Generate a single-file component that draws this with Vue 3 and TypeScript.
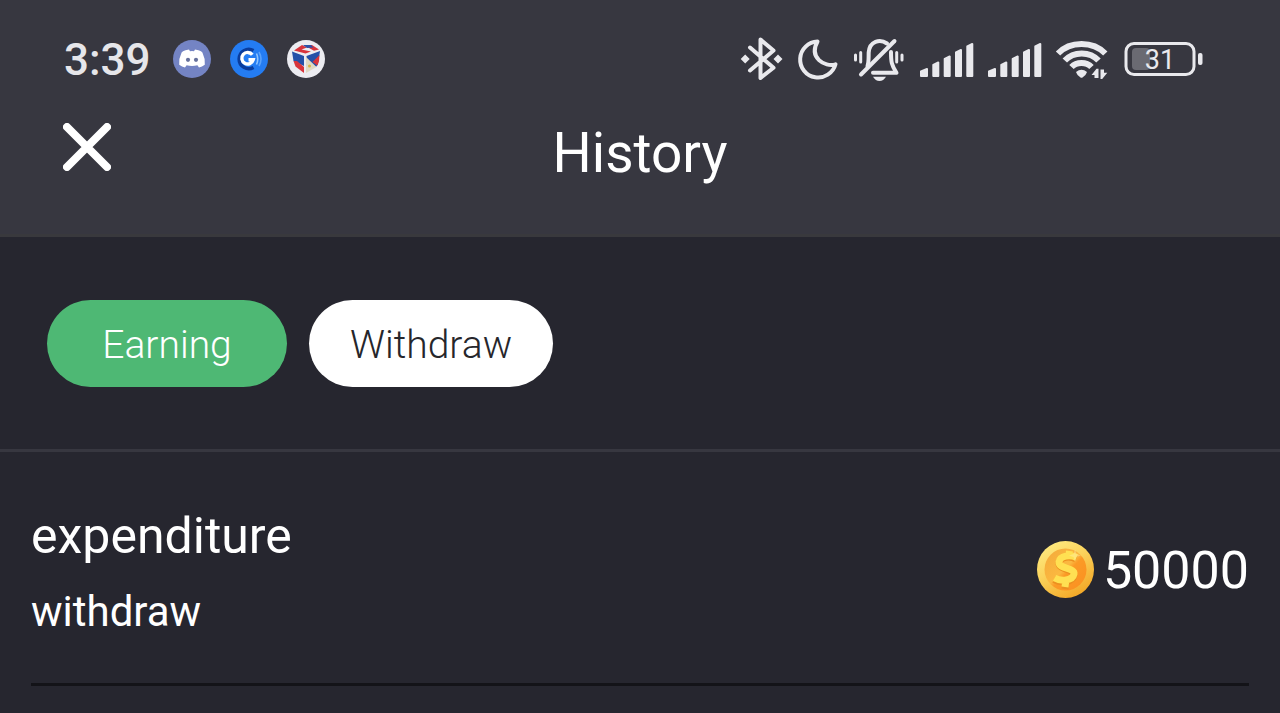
<script setup lang="ts">
import { ref } from 'vue'

type Tab = 'Earning' | 'Withdraw'

interface Entry {
  id: number
  title: string
  kind: string
  amount: number
}

const tabs: Tab[] = ['Earning', 'Withdraw']
const active = ref<Tab>('Earning')
const entries: Entry[] = [{ id: 1, title: 'expenditure', kind: 'withdraw', amount: 50000 }]
const signals = [1, 2]
</script>

<template>
  <div class="screen">
    <header class="top">
      <div class="status">
        <div class="status-left">
          <span class="time">3:39</span>
          <svg class="app" viewBox="0 0 38 38" aria-hidden="true">
            <circle cx="19" cy="19" r="19" fill="#7484c4" />
            <path fill="#fff" d="M12.500 10.200 L16 9.500 L17 11.200 Q19 10.900 21 11.200 L22 9.500 L25.500 10.200 Q28.500 11 29.400 12.600 Q32.300 18.500 31.800 24.800 Q29 27 26 27.500 L24.400 25.200 Q19 26.600 13.600 25.200 L12 27.500 Q9 27 6.200 24.800 Q5.700 18.500 8.600 12.600 Q9.500 11 12.500 10.200Z" />
            <circle cx="15" cy="19.800" r="2.100" fill="#66719c" />
            <circle cx="23" cy="19.800" r="2.100" fill="#66719c" />
          </svg>
          <svg class="app" viewBox="0 0 38 38" aria-hidden="true">
            <circle cx="19" cy="19" r="19" fill="#247cf2" />
            <path d="M23.500 10.500 A9.700 9.700 0 1 0 23.500 27.500" fill="none" stroke="#0a3c9c" stroke-width="3.500" />
            <path d="M22.300 14.800 A5.800 5.800 0 1 0 23.200 19.800 H18.500" fill="none" stroke="#fff" stroke-width="3.400" />
            <path d="M26.500 13.500 Q29 19 26.500 24.500" fill="none" stroke="#8fc4ff" stroke-width="1.600" />
            <path d="M29 12 Q33 19 29 26" fill="none" stroke="#5aa2fa" stroke-width="1.600" />
          </svg>
          <svg class="app" viewBox="0 0 38 38" aria-hidden="true">
            <circle cx="19" cy="19" r="19" fill="#ececf1" />
            <path d="M7 10.500 L15 5 L20 7.500 L14.500 9.500 L24 11.500 L18.500 13.500Z" fill="#d8343c" />
            <path d="M17 5 H25 L32 9.500 L27 10.800 L22 8Z" fill="#d8343c" />
            <path d="M16 5 H24 L26.500 7.500 L20 8Z" fill="#2c50a8" />
            <path d="M5 11.500 L17 16 V26 L6.500 21Z" fill="#2450a8" />
            <path d="M6.500 21 L10 21 L17 27 V33 L8.500 26.500Z" fill="#d8343c" />
            <path d="M33 11 L19.500 16 V20 L29 27 L31 24Z" fill="#2450a8" />
            <path d="M32.500 15 L25.500 22 L30.500 25.500 L32 21Z" fill="#d8343c" />
            <path d="M19 17 L29.500 27 L19 33Z" fill="#dfd9c4" />
            <circle cx="22.500" cy="26" r="1.500" fill="#d8b54a" />
          </svg>
        </div>
        <div class="status-right">
          <svg class="icon w41" viewBox="0 0 41 44" aria-hidden="true">
            <path class="line" d="M9 10.500 L32.500 30.800 L19.500 41 V2.500 L32.500 13.500 L9 33.500" />
            <path class="solid" d="M4.200 17.500 L8.700 22 L4.200 26.500 L-0.300 22Z M37 17.500 L41.500 22 L37 26.500 L32.500 22Z" />
          </svg>
          <svg class="icon w41" viewBox="0 0 41 44" aria-hidden="true">
            <path class="line" d="M20.500 4.500 A18 18 0 1 0 38.500 27.300 C27.500 30.500 11.500 20.500 20.500 4.500Z" />
          </svg>
          <svg class="icon w51" viewBox="0 0 51 44" aria-hidden="true">
            <path class="line" d="M41.500 4 L8 37.500" />
            <path class="line" d="M14.500 29 C16 25 15.500 20 15.700 15.500 C16.500 4 27 1.500 34 6.500" />
            <path class="line" d="M38 15 C38 25 38.500 28 43.500 35.800 H20" />
            <path class="line thin" d="M2.500 18 V23 M7.700 15.500 V25 M43.700 15.500 V25 M49 18 V23" />
            <path class="solid" d="M20 39.800 H33 Q30.500 44 26.500 44 Q22.500 44 20 39.800Z" />
          </svg>
          <svg v-for="s in signals" :key="s" class="icon w53" viewBox="0 0 53 44" aria-hidden="true">
            <path class="solid bars" d="M2 34.500 L8 32 V39 H2Z M14.300 28 L19.300 25.500 V39 H14.300Z M25.700 22 L30.700 19.500 V39 H25.700Z M37 15.500 L42 13 V39 H37Z M48.300 9.500 L53.300 7 V39 H48.300Z" />
          </svg>
          <svg class="icon w53" viewBox="0 0 53 44" aria-hidden="true">
            <path class="line wave" d="M3 16.500 C15 3.800 38 3.800 50.300 16.500 M9.800 23.500 C18.500 14 35 14 43.500 23.500 M16.500 30 C21.500 24.500 31.500 24.500 36.500 30" />
            <path class="solid" d="M21 35 Q26.500 30.500 32 35 Q31 38.500 27.500 40.500 Q26.500 41 25.500 40.500 Q22 38.500 21 35Z" />
            <path class="solid" d="M36.500 38 L41.500 31.800 H43.500 V41 H39.500 V38Z M45.500 32.500 H49 V35.800 H52.300 L47.200 42 H45.500Z" />
          </svg>
          <svg class="icon w80" viewBox="0 0 80 44" role="img" aria-label="Battery 31">
            <rect class="line case" x="3" y="6.500" width="68" height="31" rx="8" />
            <rect x="9" y="11" width="18" height="22" rx="4" fill="#6a6a72" />
            <rect class="solid" x="75" y="16" width="4.500" height="12" rx="2" />
            <text class="level" x="37" y="32" text-anchor="middle">31</text>
          </svg>
        </div>
      </div>
      <div class="bar">
        <button class="close" type="button" aria-label="Close">
          <svg viewBox="0 0 48 48" aria-hidden="true">
            <path d="M4 4 L44 44 M44 4 L4 44" stroke="#fff" stroke-width="8" stroke-linecap="round" />
          </svg>
        </button>
        <h1>History</h1>
      </div>
    </header>

    <nav class="tabs" aria-label="History type">
      <button
        v-for="tab in tabs"
        :key="tab"
        type="button"
        class="tab"
        :class="{ on: tab === active }"
        :aria-pressed="tab === active"
        @click="active = tab"
      >
        {{ tab }}
      </button>
    </nav>

    <ul class="list">
      <li v-for="entry in entries" :key="entry.id" class="entry">
        <div class="words">
          <span class="title">{{ entry.title }}</span>
          <span class="kind">{{ entry.kind }}</span>
        </div>
        <div class="amount">
          <svg class="coin" viewBox="0 0 57 57" aria-hidden="true">
            <defs>
              <linearGradient id="rim" x1="0" y1="0" x2="0.600" y2="1">
                <stop offset="0" stop-color="#fff08a" />
                <stop offset="0.500" stop-color="#fbd35c" />
                <stop offset="1" stop-color="#f3aa2a" />
              </linearGradient>
              <linearGradient id="face" x1="0" y1="0" x2="1" y2="1">
                <stop offset="0" stop-color="#f3a93a" />
                <stop offset="0.480" stop-color="#fbb840" />
                <stop offset="0.560" stop-color="#fb9a26" />
                <stop offset="1" stop-color="#fb8f20" />
              </linearGradient>
            </defs>
            <circle cx="28.500" cy="28.500" r="28.500" fill="url(#rim)" />
            <circle cx="28.500" cy="28.500" r="21" fill="url(#face)" />
            <g fill="none" stroke-linejoin="round">
              <path d="M39 18 C33 14.500 23 15.500 22 22 C21.500 29 38 28 37 34.500 C35.500 41.500 24 42 17 38.500 M32.500 11 L31 17 M29 40 L28 48" stroke="#ec9020" stroke-width="7" />
              <path d="M39.500 16.500 C33 13.500 23 14.500 22 21 C21.500 28 38 26.500 37 33 C35.500 40 24 40.500 17.500 37 M32.500 10 L31.500 16 M29 38 L28 46" stroke="#ffe052" stroke-width="7" />
            </g>
            <path d="M38 8.500 L39.500 13 L44 14.500 L39.500 16 L38 20.500 L36.500 16 L32 14.500 L36.500 13Z" fill="#fff2c0" opacity="0.350" />
          </svg>
          <span>{{ entry.amount }}</span>
        </div>
      </li>
    </ul>
  </div>
</template>

<style>
body {
  margin: 0;
  background: #26262f;
}
</style>

<style scoped>
.screen {
  min-height: 100vh;
  background: #26262f;
  color: #fff;
  font-family: Roboto, "Noto Sans", sans-serif;
  font-weight: 400;
}
.top {
  background: #373740;
  border-bottom: 3px solid #39393d;
}
.status {
  display: flex;
  justify-content: space-between;
  align-items: center;
  padding: 37px 77px 0 64px;
}
.status-left {
  display: flex;
  align-items: center;
  gap: 19px;
}
.time {
  width: 90px;
  padding-top: 2px;
  font-size: 44px;
  line-height: 42px;
  font-weight: 500;
  color: #e6e6ea;
}
.app {
  display: block;
  width: 38px;
  height: 38px;
}
.status-right {
  display: flex;
  gap: 15px;
}
.icon {
  display: block;
  height: 44px;
  overflow: visible;
}
.w41 { width: 41px; }
.w51 { width: 51px; }
.w53 { width: 53px; }
.w80 { width: 80px; }
.line {
  fill: none;
  stroke: #e9e9ed;
  stroke-width: 4px;
  stroke-linecap: round;
  stroke-linejoin: round;
}
.thin,
.case { stroke-width: 3px; }
.wave {
  stroke-width: 6px;
  stroke-linecap: butt;
}
.solid { fill: #e9e9ed; }
.bars {
  stroke: #e9e9ed;
  stroke-width: 2px;
  stroke-linejoin: round;
}
.level {
  fill: #e9e9ed;
  font-size: 27px;
  font-weight: 400;
}
.bar {
  display: grid;
  grid-template-columns: 48px 1fr 48px;
  align-items: start;
  padding: 42px 63px 50px;
}
.close {
  width: 48px;
  height: 48px;
  padding: 0;
  border: 0;
  background: none;
}
.close svg {
  display: block;
  width: 48px;
  height: 48px;
}
h1 {
  margin: 0;
  font-size: 55px;
  line-height: 61px;
  font-weight: 400;
  text-align: center;
}
.tabs {
  display: flex;
  gap: 22px;
  padding: 63px 47px 62px;
  border-bottom: 3px solid #373740;
}
.tab {
  min-width: 240px;
  height: 87px;
  padding: 2px 41px 0;
  border: 0;
  border-radius: 44px;
  background: #fff;
  color: #26262b;
  font: inherit;
  font-size: 39px;
  font-weight: 300;
}
.tab.on {
  background: #4eb874;
  color: #fff;
}
.list {
  margin: 0;
  padding: 0 31px;
  list-style: none;
}
.entry {
  display: flex;
  justify-content: space-between;
  align-items: center;
  padding: 48px 0 36px;
  border-bottom: 3px solid #131318;
}
.words {
  display: flex;
  flex-direction: column;
}
.title {
  font-size: 50px;
  line-height: 72px;
}
.kind {
  padding-top: 4px;
  font-size: 42px;
  line-height: 71px;
}
.amount {
  display: flex;
  align-items: center;
  gap: 9px;
  padding-bottom: 8px;
  font-size: 52px;
}
.amount span {
  padding-top: 2px;
  line-height: 60px;
}
.coin {
  display: block;
  width: 57px;
  height: 57px;
}
</style>
